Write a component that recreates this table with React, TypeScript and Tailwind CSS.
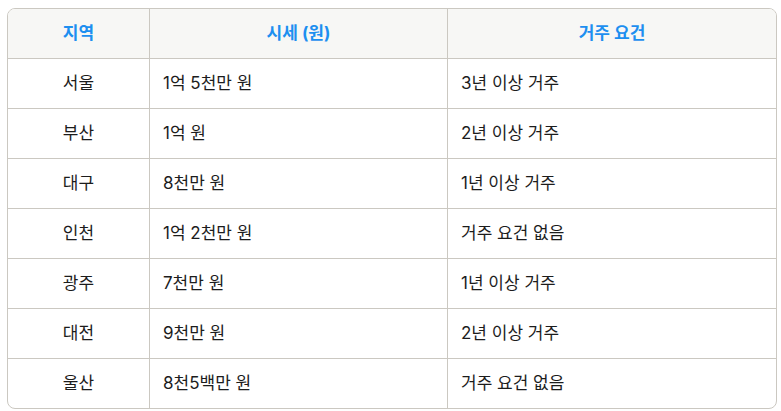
const rows = [
  { region: '서울', price: '1억 5천만 원', req: '3년 이상 거주' },
  { region: '부산', price: '1억 원', req: '2년 이상 거주' },
  { region: '대구', price: '8천만 원', req: '1년 이상 거주' },
  { region: '인천', price: '1억 2천만 원', req: '거주 요건 없음' },
  { region: '광주', price: '7천만 원', req: '1년 이상 거주' },
  { region: '대전', price: '9천만 원', req: '2년 이상 거주' },
  { region: '울산', price: '8천5백만 원', req: '거주 요건 없음' },
];

export default function App() {
  return (
    <div
      className="w-[781px] h-[411px] bg-white pt-[8px] pl-[7px]"
      style={{ fontFamily: "Inter, 'Noto Sans CJK KR', sans-serif" }}
    >
      <div className="w-[770px] border border-[#cbc8c1] rounded-[8px] overflow-hidden text-[17px] text-[#1c1c1c]">
        <div className="flex h-[49px] bg-[#f7f7f5] font-bold text-[#1d8ff0]">
          <div className="w-[142px] border-r border-[#cbc8c1] flex items-center justify-center">지역</div>
          <div className="w-[298px] border-r border-[#cbc8c1] flex items-center justify-center">시세 (원)</div>
          <div className="flex-1 flex items-center justify-center">거주 요건</div>
        </div>
        {rows.map((r) => (
          <div key={r.region} className="flex h-[50px] border-t border-[#cbc8c1]">
            <div className="w-[142px] border-r border-[#cbc8c1] flex items-center justify-center">{r.region}</div>
            <div className="w-[298px] border-r border-[#cbc8c1] flex items-center px-[13px]">{r.price}</div>
            <div className="flex-1 flex items-center px-[13px]">{r.req}</div>
          </div>
        ))}
      </div>
    </div>
  );
}
